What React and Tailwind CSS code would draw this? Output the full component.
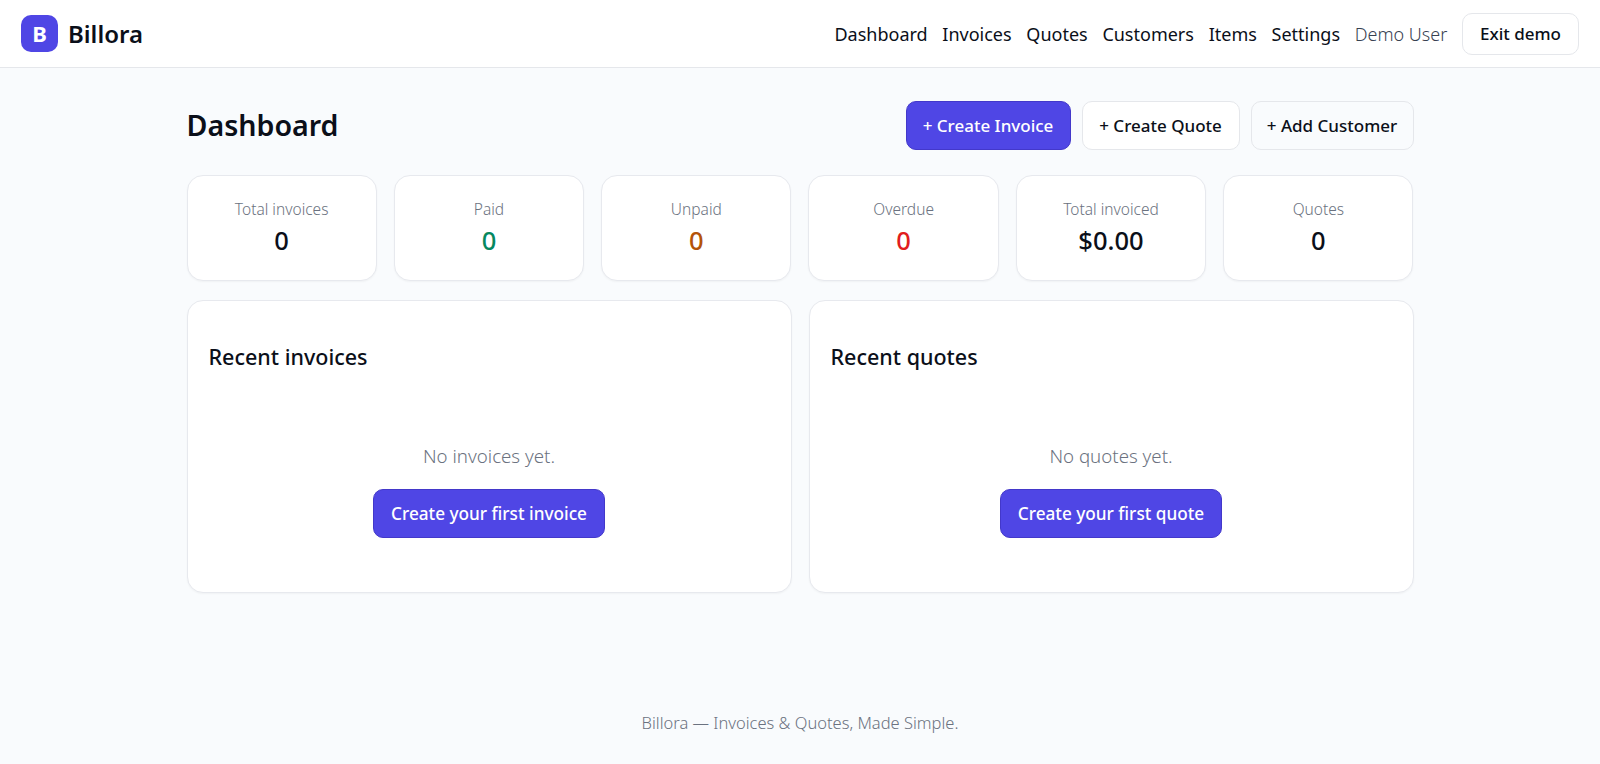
const stats = [
  { label: "Total invoices", value: "0", color: "text-[#0b0f19]" },
  { label: "Paid", value: "0", color: "text-[#06885f]" },
  { label: "Unpaid", value: "0", color: "text-[#b45309]" },
  { label: "Overdue", value: "0", color: "text-[#e11d1d]" },
  { label: "Total invoiced", value: "$0.00", color: "text-[#0b0f19]" },
  { label: "Quotes", value: "0", color: "text-[#0b0f19]" },
];

const links = ["Dashboard", "Invoices", "Quotes", "Customers", "Items", "Settings"];

const Panel = ({ title, empty, action }) => (
  <div className="h-[293px] rounded-2xl border border-[#e7e9ee] bg-white px-[21px] pt-[43px] shadow-[0_1px_2px_rgba(0,0,0,0.04)]">
    <h2 className="text-[21.5px] leading-[26px] font-medium text-[#0b0f19]">{title}</h2>
    <div className="mt-[73px] flex flex-col items-center">
      <p className="text-[18.7px] leading-[26px] font-light text-[#6b7280]">{empty}</p>
      <button className="mt-[20px] h-[49px] rounded-[10px] border border-[#4338ca] bg-[#4f46e5] px-[17px] pt-px text-[17.2px] font-medium text-white">
        {action}
      </button>
    </div>
  </div>
);

export default function App() {
  return (
    <div className="flex min-h-screen flex-col bg-[#f9fbfd] font-['Noto_Sans',sans-serif] text-[#0b0f19]">
      <header className="flex h-[68px] items-center justify-between border-b border-[#e5e7eb] bg-white pr-[21px] pl-[21px]">
        <div className="flex items-center gap-[10px]">
          <div className="flex h-[37px] w-[37px] items-center justify-center rounded-[10px] bg-[#4f46e5] text-[22px] font-bold text-white">
            B
          </div>
          <span className="text-[24px] font-semibold">Billora</span>
        </div>
        <nav className="flex items-center gap-[14.7px] text-[18px]">
          {links.map((l) => (
            <a key={l} href="#" className="pt-[2px] text-[#0b0f19]">
              {l}
            </a>
          ))}
          <span className="pt-[2px] font-light text-[#374151]">Demo User</span>
          <button className="h-[42px] w-[117px] rounded-[10px] border border-[#e5e7eb] bg-white text-[17px] font-medium">
            Exit demo
          </button>
        </nav>
      </header>

      <main className="mx-auto w-[1227px] flex-1 pt-[33px]">
        <div className="flex h-[49px] items-center justify-between">
          <h1 className="text-[28.6px] font-semibold">Dashboard</h1>
          <div className="flex gap-[11px] text-[17px] font-medium">
            <button className="h-[49px] w-[165px] rounded-[10px] border border-[#4338ca] bg-[#4f46e5] pt-px text-white">+ Create Invoice</button>
            <button className="h-[49px] w-[158px] rounded-[10px] border border-[#e5e7eb] bg-white pt-px">+ Create Quote</button>
            <button className="h-[49px] w-[163px] rounded-[10px] border border-[#e5e7eb] bg-[#f9fbfd] pt-px">+ Add Customer</button>
          </div>
        </div>

        <div className="mt-[25px] grid grid-cols-6 gap-[17px]">
          {stats.map((s) => (
            <div key={s.label} className="flex h-[106px] flex-col items-center rounded-2xl border border-[#e7e9ee] bg-white pt-[22px] shadow-[0_1px_2px_rgba(0,0,0,0.04)]">
              <div className="text-[15.5px] leading-[22px] font-light text-[#6b7280]">{s.label}</div>
              <div className={`mt-[5px] text-[25.5px] leading-[30px] font-[550] ${s.color}`}>{s.value}</div>
            </div>
          ))}
        </div>

        <div className="mt-[19px] grid grid-cols-2 gap-[17px]">
          <Panel title="Recent invoices" empty="No invoices yet." action="Create your first invoice" />
          <Panel title="Recent quotes" empty="No quotes yet." action="Create your first quote" />
        </div>
      </main>

      <footer className="pb-[29px] text-center text-[16.5px] leading-[24px] font-light text-[#6b7280]">
        Billora — Invoices &amp; Quotes, Made Simple.
      </footer>
    </div>
  );
}
